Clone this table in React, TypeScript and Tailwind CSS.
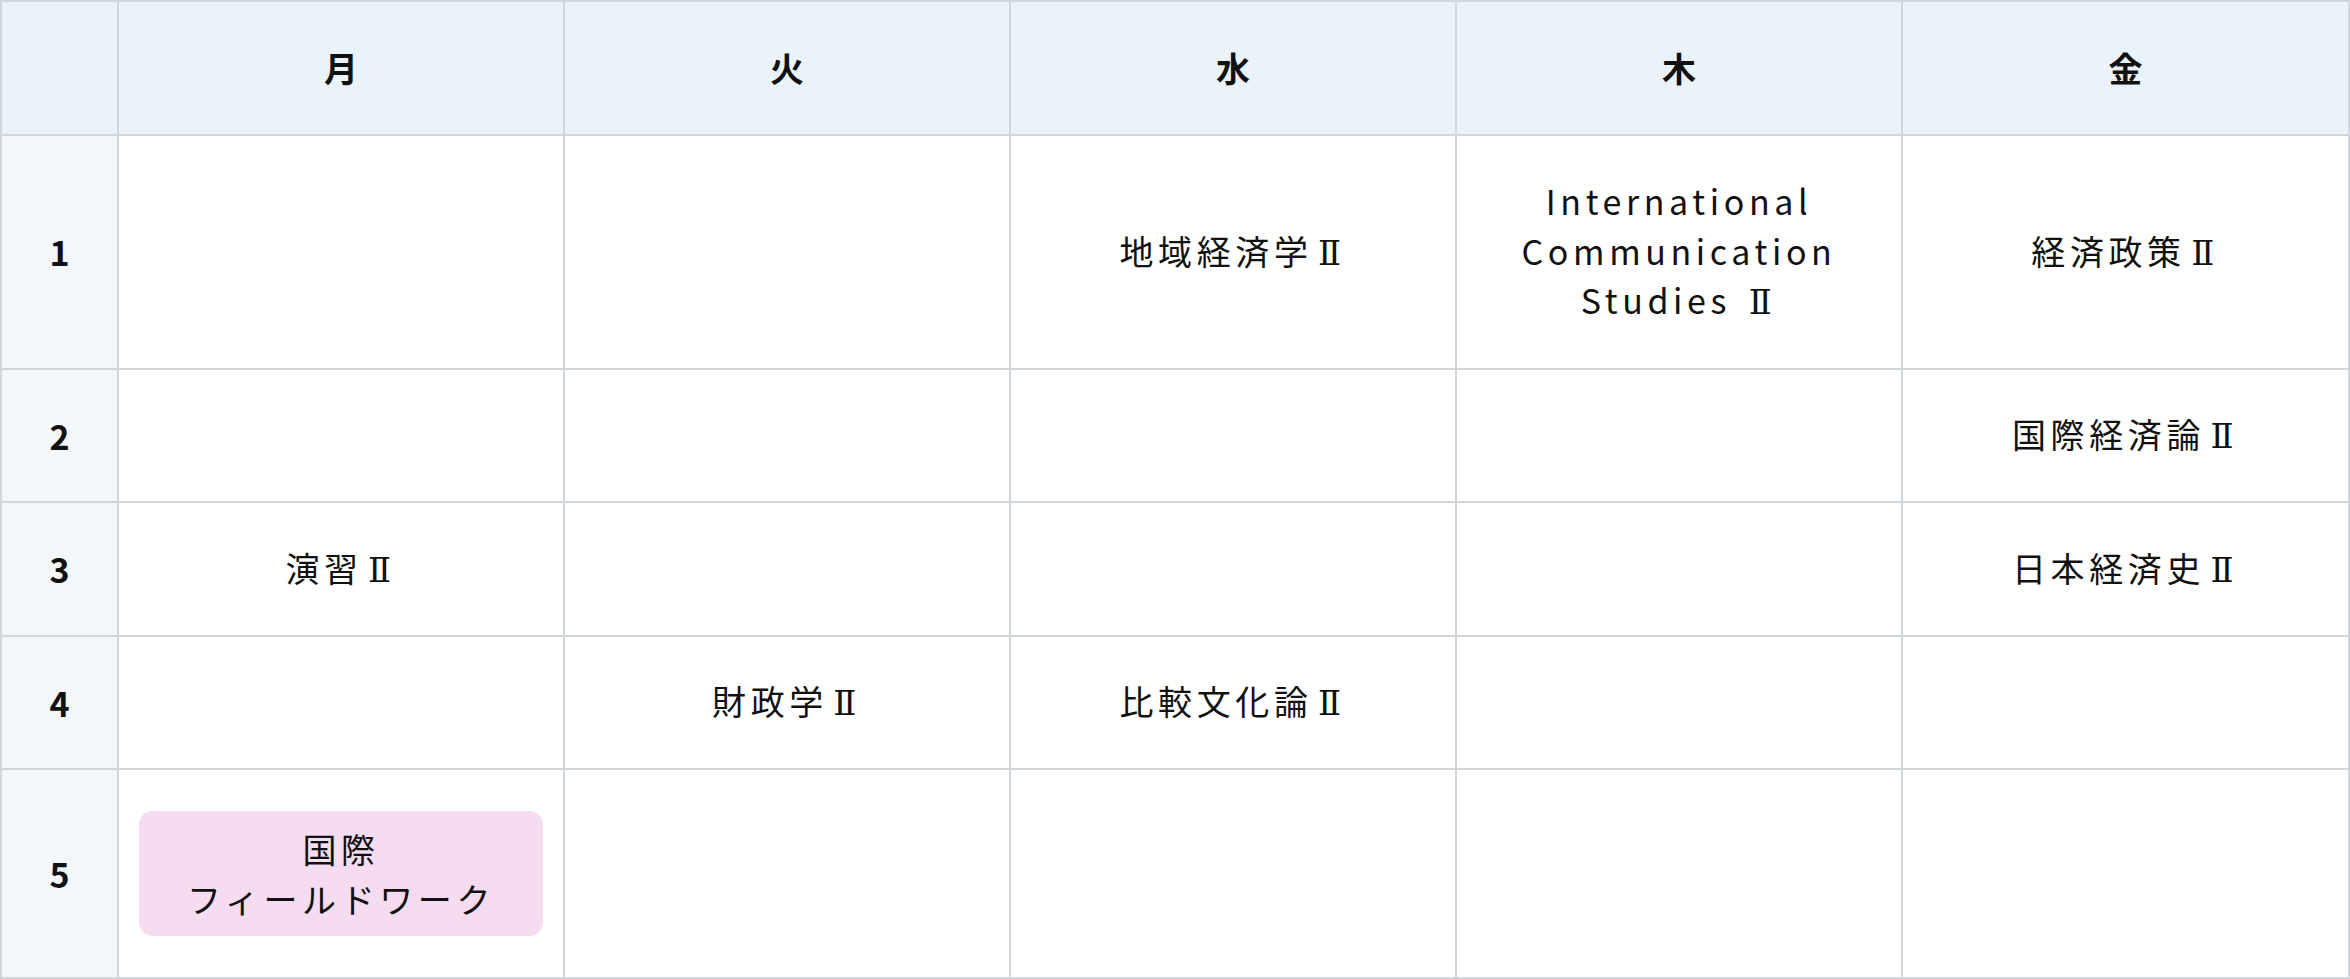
import React from "react";

const days = ["月", "火", "水", "木", "金"];

const R = () => (
  <span className="inline-block w-[34px] text-center font-['DejaVu_Serif',serif] tracking-normal">Ⅱ</span>
);

type Cell = null | { text: React.ReactNode; pink?: boolean };

const rows: { label: string; cells: Cell[] }[] = [
  {
    label: "1",
    cells: [
      null,
      null,
      { text: <>地域経済学<R /></> },
      {
        text: (
          <>
            International
            <br />
            Communication
            <br />
            Studies <R />
          </>
        ),
      },
      { text: <>経済政策<R /></> },
    ],
  },
  { label: "2", cells: [null, null, null, null, { text: <>国際経済論<R /></> }] },
  { label: "3", cells: [{ text: <>演習<R /></> }, null, null, null, { text: <>日本経済史<R /></> }] },
  { label: "4", cells: [null, { text: <>財政学<R /></> }, { text: <>比較文化論<R /></> }, null, null] },
  {
    label: "5",
    cells: [
      {
        text: (
          <>
            国際
            <br />
            フィールドワーク
          </>
        ),
        pink: true,
      },
      null,
      null,
      null,
      null,
    ],
  },
];

export default function App() {
  return (
    <div
      lang="ja"
      className="w-[2350px] h-[979px] bg-white text-[#111] overflow-hidden"
      style={{ fontFamily: '"Noto Sans CJK JP", "Noto Sans", sans-serif' }}
    >
      <div className="grid grid-cols-[115px_444px_444px_444px_444px_1fr] grid-rows-[132px_232px_131px_132px_131px_207px] gap-[2px] p-[2px] bg-[#d1d6db] w-full h-full">
        <div className="bg-[#eaf3fa]" />
        {days.map((d) => (
          <div
            key={d}
            className="bg-[#eaf3fa] flex items-center justify-center text-[34px] font-bold leading-none"
          >
            {d}
          </div>
        ))}
        {rows.map((r) => (
          <React.Fragment key={r.label}>
            <div className="bg-[#f3f7fa] flex items-center justify-center text-[34px] font-bold leading-none">
              {r.label}
            </div>
            {r.cells.map((c, i) => (
              <div
                key={i}
                className="bg-white flex items-center justify-center px-[20px] text-[34px] leading-[49.5px] tracking-[4.6px] text-center"
              >
                {c &&
                  (c.pink ? (
                    <div className="w-full bg-[#f5dcf1] rounded-[14px] py-[13px] text-center">
                      {c.text}
                    </div>
                  ) : (
                    <div>{c.text}</div>
                  ))}
              </div>
            ))}
          </React.Fragment>
        ))}
      </div>
    </div>
  );
}
